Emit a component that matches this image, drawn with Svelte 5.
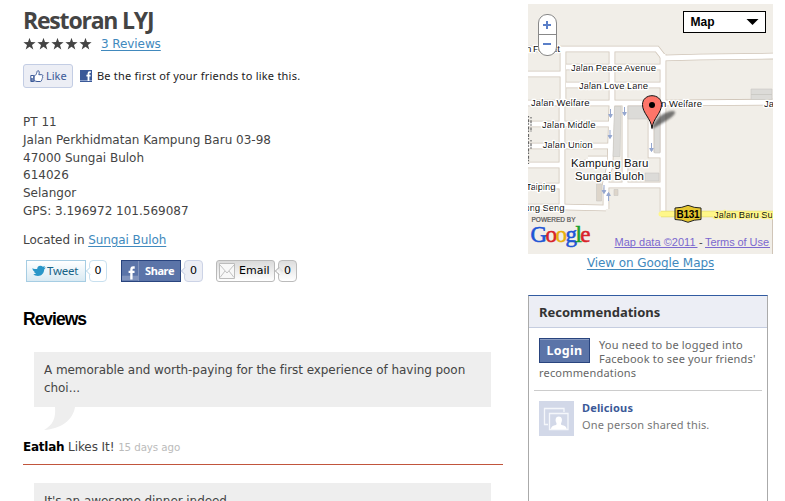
<script>
  const address = [
    'PT 11',
    'Jalan Perkhidmatan Kampung Baru 03-98',
    '47000 Sungai Buloh',
    '614026',
    'Selangor',
    'GPS: 3.196972 101.569087'
  ];
  const roads = [
    'M520 49H657L664 58L700 57L780 56',
    'M563 49V100', 'M562 103V208', 'M612 49V104L610 165L605 186',
    'M566 67H662', 'M566 85H662', 'M520 74H562', 'M520 103H664L780 102',
    'M520 124H610', 'M520 146H610', 'M520 165H562', 'M520 186H562',
    'M520 207H563L606 208', 'M663 54V214', 'M625 104V184',
    'M651 103V155H663', 'M603 185H663', 'M588 159H607', 'M588 159V167',
    'M606 184V209'
  ];
  const labels = [
    ['Jalan Peace Avenue', 571, 71, 85, 9.6],
    ['Jalan Love Lane', 579, 88.5, 69, 9.6],
    ['Jalan Welfare', 531, 106, 58.5, 9.6],
    ['Jalan Middle', 542, 128, 53.5, 9.6],
    ['Jalan Union', 542.7, 148, 50, 9.6],
    ['Kampung Baru', 571, 167, 77.5, 11.5],
    ['Sungai Buloh', 575, 180, 69, 11.5],
    ['Taiping', 526, 189.5, 29.5, 9.6],
    ['ong Seng', 524.5, 210.5, 40, 9.6],
    ['n Forrest', 526, 52, 34, 9.6],
    ['n Welfare', 661, 107, 41, 9.6],
    ['Jalan', 764, 106.5, 23, 9.6]
  ];
  const arrows = [[610.5, 113, 0], [624.5, 111, 0], [610, 134, 0], [651.5, 147, 0], [604, 189, 0], [608.5, 197, 180]];
</script>

<div class="page">
  <main>
    <h1>Restoran LYJ</h1>
    <div class="rating">
      <svg width="70" height="14" viewBox="0 0 70 14">
        {#each [0, 1, 2, 3, 4] as i}
          <path transform="translate({i * 14} -1)" d="M6.5 .8 8 5.1 12.6 5.2 9 8 10.3 12.4 6.5 9.8 2.7 12.4 4 8 .4 5.2 5 5.1Z" fill="#444" />
        {/each}
      </svg>
      <a href="#reviews">3 Reviews</a>
    </div>
    <div class="like-row">
      <button class="like">
        <svg width="14" height="13" viewBox="0 0 14 13">
          <path d="M.8 5.5h3v6h-3zM4 6.2C5.8 5.5 6.4 4 6.8 2.6 7 1.5 7.3.7 8.1.7c1.5.3 1.3 2 .7 4h3.1c1.2.2 1.2 1.5.5 1.9.5.6.3 1.4-.3 1.8.3.7 0 1.3-.6 1.6.1.9-.3 1.5-1.2 1.5H7c-1.2 0-1.8-.7-3-.8z" fill="#fff" stroke="#3b5998" />
          <path d="M1.2 8h1.5v3H1.2z" fill="#3b5998" />
        </svg>
        <span>Like</span>
      </button>
      <svg class="fb" width="12" height="12" viewBox="0 0 12 12">
        <path d="M0 0h12v12H0z" fill="#3b5998" /><path d="M0 10h12v1H0z" fill="#8da2cc" />
        <path d="M10.8 2.1H9.7c-1 0-1.2.5-1.2 1.5V11M6.4 5.6h4.2" stroke="#fff" stroke-width="1.8" fill="none" />
      </svg>
      <span class="be">Be the first of your friends to like this.</span>
    </div>
    <address>
      {#each address as line}<div>{line}</div>{/each}
    </address>
    <p class="located">Located in <a href="#area">Sungai Buloh</a></p>
    <div class="share">
      <div class="btn tweet">
        <svg width="14" height="12" viewBox="0 0 14 12"><path d="M.3 3.2C2.3 4 4 4.2 5.2 4.1 5 2.4 6.3.7 8.4.7c1 0 1.8.4 2.5 1L13 1.1l-.9 1.7 1.8-.2-1.7 1.8c-.1 3.6-2.7 6.5-6.2 6.5-2 0-3.7-.8-4.7-1.7 1 .1 2-.2 2.8-.9C2.900 8.200 2.300 7.700 2 6.800h1C1.500 6 .7 5 .3 3.200z" fill="#2996c8" /></svg>
        <span>Tweet</span>
      </div>
      <div class="count c-tweet">0</div>
      <div class="btn fbshare">
        <i><svg width="17" height="20" viewBox="0 0 17 20"><path d="M0 15h17v5H0z" fill="#8194bd" /><path d="M13.500 6.300H12c-1.500 0-2 .8-2 2.400V19M7 11h6.300" fill="none" stroke="#fff" stroke-width="2.500" /></svg></i>
        <span>Share</span>
      </div>
      <div class="count c-fb">0</div>
      <div class="btn email">
        <svg width="16" height="16" viewBox="0 0 16 16"><path d="M.5.5h15v15H.5z" fill="#f8f8f8" stroke="#bcbcbc" /><path d="M1 2l7 8 7-8M1 14.500l5-6.500M15 14.500L10 8" fill="none" stroke="#c2c2c2" /></svg>
        <span>Email</span>
      </div>
      <div class="count c-mail">0</div>
    </div>
    <h2>Reviews</h2>
    <section class="review">
      <blockquote>A memorable and worth-paying for the first experience of having poon choi...</blockquote>
      <svg class="tail" width="32" height="24" viewBox="0 0 32 24"><path d="M11 0H31C29 13 17 22 0 23C9 18 12 11 11 0Z" fill="#eee" /></svg>
      <div class="by"><b>Eatlah</b> <span class="likes">Likes It!</span> <small>15 days ago</small></div>
    </section>
    <section class="review second">
      <blockquote>It's an awesome dinner indeed.</blockquote>
    </section>
  </main>

  <aside>
    <svg class="map" width="245" height="250" viewBox="528 4 245 250">
      <defs>
        <filter id="soft"><feGaussianBlur stdDeviation="1.300" /></filter>
      </defs>
      <path d="M528 4h245v250H528z" fill="#f1eee8" />
      {#each roads as d}<path {d} fill="none" stroke="#d0c5b8" stroke-width="6.600" />{/each}
      {#each roads as d}<path {d} fill="none" stroke="#fff" stroke-width="5" />{/each}
      <g fill="#dcdbd8" stroke="#c9c7c3" stroke-width=".6">
        <path d="M614.500 106.500h6.500l-1 50h-7zM628 106h20v13h-20zM654.500 106h5.500v47h-5.500zM645 173h14v8h-14zM751 89h21v5.500h-21zM751 94.500h21v5h-21z" />
        <path d="M614 189.500h4v6h-4zM596.500 184h5v17h-5z" fill="#ddd5ca" />
      </g>
      <path d="M661 214H773" stroke="#e5dc70" stroke-width="6.500" />
      <path d="M661 214H773" stroke="#fff78a" stroke-width="5" stroke-linecap="round" />
      <path d="M772.500 217V254" stroke="#d0c5b8" />
      {#each arrows as [x, y, r]}
        <path d="M0-4V3M-1.800 1.500L0 4.500 1.800 1.500Z" transform="translate({x} {y}) rotate({r})" stroke="#94a6cf" fill="#94a6cf" />
      {/each}
      <path d="M528.500 116v48M531 117v15M531 140v10" stroke="#666" stroke-width="1.200" stroke-dasharray="1.500 1.800 3 1" />
      {#each labels as [t, x, y, w, s]}
        <text {x} {y} textLength={w} font-size={s} class="label">{t}</text>
      {/each}
      <text x="714" y="217.500" textLength="64" font-size="9.600" class="label yellow">Jalan Baru Sun</text>
      <path d="M675 208Q682 208 688 205.300 694 208 701 208V219.500Q694 219.500 688 222.300 682 219.500 675 219.500Z" fill="#e5c62f" stroke="#222" />
      <text x="676.500" y="218" textLength="23" font-size="10" font-weight="bold">B131</text>

      <path d="M652 129C655 119 663 111 674 111 679 114 665 122 652 129Z" fill="#333" opacity=".65" filter="url(#soft)" />
      <path d="M652 128.500C651 118 642.500 113.500 642.500 104.500 642.500 99 647 95.700 652 95.700S661.500 99 661.500 104.500C661.500 113.500 653 118 652 128.500Z" fill="#fe7569" stroke="#111" />
      <circle cx="652" cy="105" r="3" />

      <rect x="538.500" y="14.500" width="18" height="41" rx="8.500" fill="#fff" stroke="#888" />
      <path d="M539 34.500h17" stroke="#888" />
      <path d="M543 25h8M547 21v8M543 44h8" stroke="#5a7fc8" stroke-width="2" />

      <rect x="683.500" y="11.500" width="82" height="21" fill="#fff" stroke="#000" />
      <text x="690.500" y="26" textLength="24" font-size="12" font-weight="bold">Map</text>
      <path d="M746.500 19h12l-6 6z" />

      <text x="531.500" y="221.500" textLength="44" font-size="6.500" fill="#555" stroke="#555" stroke-width=".2">POWERED BY</text>
      <text x="530.500" y="241.500" textLength="60" font-size="23" class="google"><tspan fill="#1d55d5" stroke="#1d55d5">G</tspan><tspan fill="#d8232a" stroke="#d8232a">o</tspan><tspan fill="#e8b010" stroke="#e8b010">o</tspan><tspan fill="#1d55d5" stroke="#1d55d5">g</tspan><tspan fill="#18a02c" stroke="#18a02c">l</tspan><tspan fill="#d8232a" stroke="#d8232a">e</tspan></text>
      <text x="614.500" y="246" textLength="81" font-size="11" fill="#7b68cf">Map data ©2011</text>
      <text x="699" y="246" font-size="11" fill="#444">-</text>
      <text x="705" y="246" textLength="64" font-size="11" fill="#7b68cf">Terms of Use</text>
      <path d="M614.500 247.500h83M705 247.500h65" stroke="#7b68cf" />
    </svg>
    <a class="view" href="#maps">View on Google Maps</a>

    <section class="recs">
      <h3>Recommendations</h3>
      <div class="login-row">
        <button class="login">Login</button>
        <p>You need to be logged into<br />Facebook to see your friends'<br />recommendations</p>
      </div>
      <div class="item">
        <svg width="35" height="35" viewBox="0 0 35 35">
          <path d="M0 0h35v35H0z" fill="#d2d8e8" />
          <path d="M25 11V7.500H5.500V23.500H9" fill="none" stroke="#f5f7fb" stroke-width="1.300" />
          <path d="M10.500 12.500h18.500v16H10.500z" fill="#d2d8e8" stroke="#f5f7fb" stroke-width="1.300" />
          <path d="M12 28c0-2.500 2-3.300 5-4 .8-.3.700-1.500.2-2.500-1.200-2.500-.6-6 2.600-6s3.800 3.500 2.600 6c-.5 1-.6 2.200.2 2.500 3 .7 5 1.500 5 4z" fill="#fff" />
        </svg>
        <div><b>Delicious</b><span>One person shared this.</span></div>
      </div>
    </section>
  </aside>
</div>

<style>
  .page { width: 785px; height: 501px; overflow: hidden; background: #fff; display: flex; box-sizing: border-box; padding-left: 23px; font: 12px/17.8px "DejaVu Sans", sans-serif; color: #444; }
  main { width: 480px; margin-right: 25px; flex: none; }
  a { color: #4189bd; text-decoration: underline; text-underline-offset: 2px; }
  h1 { margin: 0; padding-top: 5px; height: 31px; line-height: 31px; font-family: "Open Sans", sans-serif; font-size: 23px; font-weight: 700; letter-spacing: -1.2px; color: #444; }
  .rating { display: flex; align-items: center; height: 16px; gap: 8px; padding-top: 1px; }
  .rating a { letter-spacing: -.08px; }
  .like-row { display: flex; align-items: center; height: 24px; margin-top: 11px; font: 11px "Noto Sans", sans-serif; color: #222; }
  button { font: inherit; padding: 0; margin: 0; }
  .like { box-sizing: border-box; width: 50px; height: 24px; display: flex; align-items: center; gap: 2px; padding-left: 6px; border: 1px solid #c3cde4; border-radius: 3px; background: #eceef5; color: #3b5998; }
  .like span { margin-top: -1px; }
  .fb { margin: 0 5px 0 7px; }
  .be { letter-spacing: .22px; margin-top: -2px; }
  address { font-style: normal; margin-top: 26px; }
  .located { margin: 11px 0 0; letter-spacing: -.08px; }
  .share { display: flex; height: 22px; margin: 10px 0 0 3px; color: #000; font-size: 11px; }
  .btn, .count { box-sizing: border-box; height: 22px; display: flex; align-items: center; padding-top: 1px; }
  .tweet { width: 60px; border: 1px solid #a6cde3; background: linear-gradient(#fff, #d9eaf3); padding: 0 0 0 5px; gap: 1px; color: #186487; font: 11.5px "Noto Sans", sans-serif; }
  .tweet span { letter-spacing: -.2px; }
  .count { position: relative; width: 18px; margin-left: 3px; justify-content: center; border: 1px solid #c8e0ef; border-radius: 4px; background: #fff; }
  .count::before { content: ""; position: absolute; left: -3px; top: 7px; width: 5px; height: 5px; background: inherit; border: inherit; border-width: 0 0 1px 1px; border-radius: 0; transform: rotate(45deg); }
  .fbshare { width: 60px; margin-left: 14px; padding: 0; border: 1px solid #29447e; background: #5b74a8; color: #fff; font: bold 11px "Noto Sans", sans-serif; }
  .fbshare span { letter-spacing: -.4px; }
  .fbshare i { display: flex; width: 16px; height: 20px; border-right: 1px solid #8194bd; overflow: hidden; margin-right: 6px; }
  .c-fb { background: #eceef5; border-color: #ccd3e6; width: 19px; }
  .email { width: 59px; margin-left: 13px; border: 1px solid #b9b9b9; border-radius: 3px; background: linear-gradient(#dadada, #fff); padding-left: 2px; gap: 4px; }
  .email svg { margin-top: -1px; }
  .c-mail { width: 19px; border-color: #bbb; background: linear-gradient(#ddd, #fff); }
  h2 { margin: 26px 0 0; height: 22px; line-height: 22px; font-family: "Liberation Sans", sans-serif; font-size: 17.5px; letter-spacing: -1px; color: #000; }
  .review { margin-top: 22px; height: 112px; border-bottom: 1px solid #c1553c; display: flex; flex-direction: column; }
  .second { margin-top: 18px; }
  blockquote { flex: none; margin: 0 12px 0 11px; padding: 10.500px 10px 8.900px; background: #eee; letter-spacing: -.06px; }
  .tail { margin-left: 21px; flex: none; }
  .by { margin-top: 7px; line-height: 18px; letter-spacing: -.08px; }
  .by b { color: #000; letter-spacing: -.25px; }
  .by small { font-size: 10.300px; color: #bbb; letter-spacing: -.1px; }
  aside { width: 245px; flex: none; display: flex; flex-direction: column; padding-top: 4px; }
  .map { display: block; font-family: "Liberation Sans", Arial, sans-serif; flex: none; }
  .label { fill: #111; stroke: #fff; stroke-width: 2.500px; stroke-linejoin: round; paint-order: stroke; }
  .yellow { stroke: #fff78a; }
  .google { font-family: "Liberation Serif", serif; stroke-width: .6px; }
  .view { text-align: center; line-height: 18px; letter-spacing: -.08px; }
  .recs { box-sizing: border-box; width: 240px; height: 240px; flex: none; margin-top: 23px; border: 1px solid #aaa; border-top-color: #315ba1; font: 11px/14px "Noto Sans", sans-serif; color: #666; }
  h3 { margin: 0; height: 31px; line-height: 32px; padding-left: 10px; background: #eceef5; border-bottom: 1px solid #c5cde0; font-size: 13px; color: #333; }
  .login-row { height: 62px; margin: 0 5px; padding: 0 0 0 5px; border-bottom: 1px solid #ccc; }
  .login-row p { margin: 0; padding-top: 10px; letter-spacing: .18px; }
  .login { float: left; box-sizing: border-box; width: 51px; height: 25px; margin: 10px 9px 0 0; border: 1px solid #29447e; background: #5b74a8; box-shadow: inset 0 1px #8a9cc2; color: #fff; font: bold 12.500px "Noto Sans", sans-serif; letter-spacing: .3px; }
  .item { display: flex; gap: 8px; padding: 10px; }
  .item div { display: flex; flex-direction: column; gap: 3px; }
  .item b { color: #3b5998; letter-spacing: .15px; }
  .item span { color: #777; letter-spacing: .16px; }
</style>
